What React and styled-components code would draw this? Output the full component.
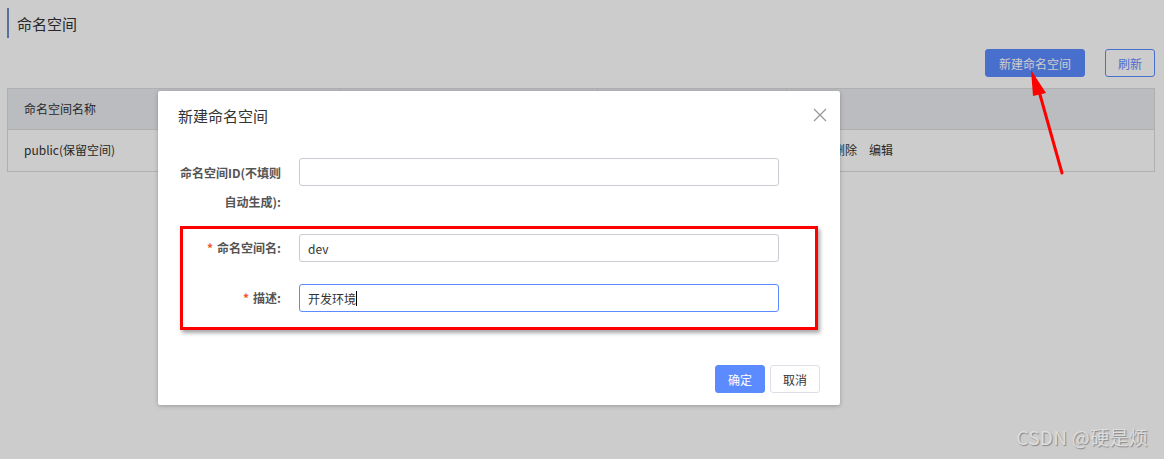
import React from "react";
import styled, { createGlobalStyle } from "styled-components";

const Global = createGlobalStyle`
  html, body { margin: 0; padding: 0; }
  body {
    width: 1164px; height: 459px; overflow: hidden; background: #fff;
    font-family: "Noto Sans CJK SC", "Noto Sans", sans-serif;
    color: #333;
  }
`;

const Page = styled.div`
  position: relative;
  width: 1164px;
  height: 459px;
  padding: 8px 9px 0 7px;
  box-sizing: border-box;
`;

const Title = styled.div`
  border-left: 2px solid #6d8ec4;
  padding-left: 8px;
  height: 30px;
  line-height: 31px;
  font-size: 15px;
  color: #333;
`;

const Toolbar = styled.div`
  display: flex;
  justify-content: flex-end;
  gap: 20px;
  margin-top: 11px;
`;

const Button = styled.button`
  height: 28px;
  padding: 0 ${(p) => (p.$pad || 12)}px;
  border-radius: 3px;
  font-family: inherit;
  font-size: 12px;
  cursor: pointer;
  border: 1px solid ${(p) => (p.$primary ? "#5c8bff" : p.$outline ? "#5c8bff" : "#dcdfe6")};
  background: ${(p) => (p.$primary ? "#5c8bff" : "#fff")};
  color: ${(p) => (p.$primary ? "#fff" : p.$outline ? "#5c8bff" : "#333")};
`;

const Table = styled.div`
  margin-top: 11px;
  border: 1px solid #dcdcdc;
  display: grid;
  grid-template-columns: 332px 258px 189px 1fr;
`;

const Cell = styled.div`
  height: 41px;
  display: flex;
  align-items: center;
  padding-left: ${(p) => p.$pl || 16}px;
  padding-bottom: 2px;
  box-sizing: border-box;
  font-size: 12px;
  color: #333;
  background: ${(p) => (p.$head ? "#eaebef" : "#fff")};
  border-bottom: ${(p) => (p.$head ? "1px solid #dcdcdc" : "none")};
  border-right: ${(p) => (p.$last ? "none" : p.$head ? "1px solid #dcdcdc" : "none")};
  gap: 12px;
`;

const Overlay = styled.div`
  position: absolute;
  inset: 0;
  background: rgba(0, 0, 0, 0.2);
`;

const Modal = styled.div`
  position: absolute;
  left: 158px;
  top: 91px;
  width: 682px;
  height: 314px;
  background: #fff;
  border-radius: 2px;
  box-shadow: 0 1px 4px rgba(0, 0, 0, 0.25);
  box-sizing: border-box;
  display: flex;
  flex-direction: column;
`;

const ModalHeader = styled.div`
  display: flex;
  justify-content: space-between;
  align-items: center;
  padding: 12px 12px 0 20px;
  height: 24px;
  font-size: 15px;
  color: #333;
`;

const Close = styled.span`
  display: flex;
  color: #999;
  cursor: pointer;
`;

const Form = styled.div`
  padding: 31px 0 0 0;
  display: flex;
  flex-direction: column;
`;

const Row = styled.div`
  display: flex;
  align-items: flex-start;
  margin-bottom: ${(p) => p.$mb || 0}px;
`;

const Label = styled.label`
  width: 123px;
  flex: none;
  text-align: right;
  font-size: 12px;
  font-weight: bold;
  color: #555;
  line-height: 28px;
  padding-right: 18px;
  box-sizing: content-box;
`;

const Star = styled.span`
  color: #f0502c;
  margin-right: 4px;
`;

const Input = styled.div`
  width: 480px;
  height: 28px;
  box-sizing: border-box;
  border: 1px solid ${(p) => (p.$focus ? "#5c8bff" : "#c9cbd3")};
  border-radius: 3px;
  font-size: 12px;
  padding-left: 8px;
  display: flex;
  align-items: center;
  color: #333;
`;

const Caret = styled.span`
  display: inline-block;
  width: 1px;
  height: 15px;
  background: #000;
`;

const Highlight = styled.div`
  margin-left: 22px;
  padding: 5px 0 0 0;
  width: 638px;
  height: 104px;
  box-sizing: border-box;
  border: 3px solid #ff0000;
  box-shadow: 2px 3px 4px rgba(0, 0, 0, 0.35);
`;

const HLabel = styled(Label)`
  width: 98px;
`;

const Footer = styled.div`
  margin-top: auto;
  display: flex;
  justify-content: flex-end;
  gap: 5px;
  padding: 0 20px 12px 0;
`;

const Arrow = styled.svg`
  position: absolute;
  left: 1015px;
  top: 60px;
`;

const Watermark = styled.div`
  position: absolute;
  right: 16px;
  bottom: 9px;
  font-size: 19px;
  letter-spacing: 0.3px;
  color: #ddd;
  text-shadow: 1px 1px 1px #888;
  font-family: "Noto Sans CJK SC", "Noto Sans", sans-serif;
`;

export default function App() {
  return (
    <>
      <Global />
      <Page>
        <Title>命名空间</Title>
        <Toolbar>
          <Button $primary $pad={13}>新建命名空间</Button>
          <Button $outline $pad={12}>刷新</Button>
        </Toolbar>
        <Table>
          <Cell $head>命名空间名称</Cell>
          <Cell $head></Cell>
          <Cell $head></Cell>
          <Cell $head $last></Cell>
          <Cell>public(保留空间)</Cell>
          <Cell></Cell>
          <Cell></Cell>
          <Cell $last $pl={46}>
            <span>删除</span>
            <span>编辑</span>
          </Cell>
        </Table>
        <Overlay />
        <Arrow width="60" height="125" viewBox="0 0 60 125">
          <line x1="47" y1="113" x2="22" y2="24" stroke="#ff0000" strokeWidth="3" strokeLinecap="round" />
          <polygon points="16,10 31,33 18,36" fill="#ff0000" />
        </Arrow>
        <Modal>
          <ModalHeader>
            <span>新建命名空间</span>
            <Close>
              <svg width="16" height="16" viewBox="0 0 16 16">
                <path d="M2 2 L14 14 M14 2 L2 14" stroke="#999" strokeWidth="1.3" />
              </svg>
            </Close>
          </ModalHeader>
          <Form>
            <Row $mb={10}>
              <Label style={{ lineHeight: "29px" }}>
                命名空间ID(不填则
                <br />
                自动生成):
              </Label>
              <Input />
            </Row>
            <Highlight>
              <Row $mb={22}>
                <HLabel>
                  <Star>*</Star>命名空间名:
                </HLabel>
                <Input>dev</Input>
              </Row>
              <Row>
                <HLabel>
                  <Star>*</Star>描述:
                </HLabel>
                <Input $focus>
                  开发环境<Caret />
                </Input>
              </Row>
            </Highlight>
          </Form>
          <Footer>
            <Button $primary $pad={12}>确定</Button>
            <Button $pad={12}>取消</Button>
          </Footer>
        </Modal>
        <Watermark>CSDN @硬是烦</Watermark>
      </Page>
    </>
  );
}
